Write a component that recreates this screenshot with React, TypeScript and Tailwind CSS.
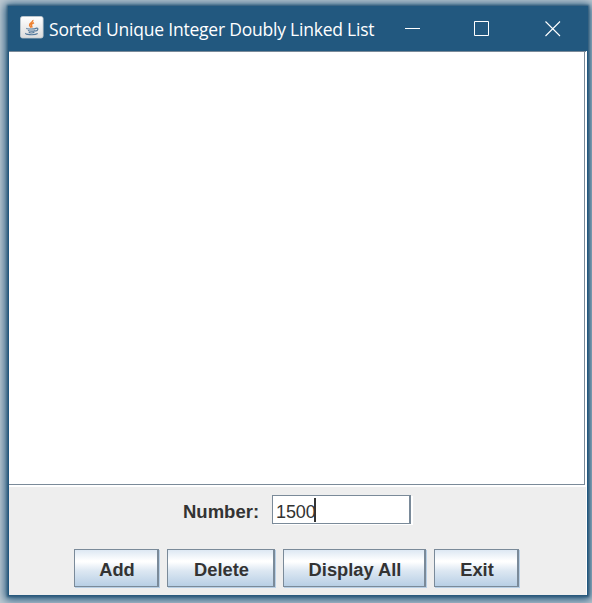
import React from 'react';

function JavaIcon() {
  return (
    <svg className="block h-6 w-6 shrink-0" viewBox="0 0 24 24" fill="none">
      <defs>
        <linearGradient id="tile" x1="0" y1="0" x2="0" y2="1">
          <stop offset="0" stopColor="#ffffff" />
          <stop offset="1" stopColor="#dcdcdc" />
        </linearGradient>
      </defs>
      <rect x="0.5" y="0.5" width="22.6" height="21.5" rx="2" fill="url(#tile)" stroke="#c3cbd1" strokeWidth="0.8" />
      <path d="M12.9 4c.7 2.1-3.9 3.1-3.3 5.4.2.8 1.1 1.5 1.5 2.2M14 6.8c-1.8.8-3.2 1.6-2.5 2.8.4.7.8 1.1.1 2" stroke="#ee8130" strokeWidth="1.5" />
      <path d="M6.9 12.2c-1.5.8 7.5 1.2 9.5 0M8 14.4c1 1 5.8 1 7.4 0M8.8 16.3c1 .9 4 .9 5.6 0M15.6 12.3c3.6-1 2.7 2.5-.3 2.9M5.9 17.2c-2 1.3 8.3 2.4 11.8.4" stroke="#52789b" strokeWidth="1.15" />
    </svg>
  );
}

function TitleBar() {
  return (
    <header className="flex h-[45px] shrink-0 items-start bg-[#22587f] pl-3">
      <div className="pt-[10px]"><JavaIcon /></div>
      <h1 className="ml-[5px] mt-[10px] w-[348px] shrink-0 whitespace-nowrap font-['Open_Sans','Noto_Sans',sans-serif] text-[17.5px] font-normal leading-[26px] tracking-[-0.22px] text-white">
        Sorted Unique Integer Doubly Linked List
      </h1>
      <div className="ml-2 mt-[15px] flex gap-[54px]">
        <svg className="h-4 w-4" viewBox="0 0 16 16"><path d="M0 7.5h15" stroke="white" /></svg>
        <svg className="-ml-px h-4 w-4" viewBox="0 0 16 16" fill="none"><path d="M.5.5h14v14H.5z" stroke="white" /></svg>
        <svg className="ml-px h-4 w-4" viewBox="0 0 16 16"><path d="m.5.5 14.5 14.5M15 .5.5 15" stroke="white" strokeWidth="1.1" /></svg>
      </div>
    </header>
  );
}

function SwingButton({ label, width }: { label: string; width: string }) {
  return (
    <button className={`${width} h-[38px] shrink-0 border border-r-2 border-[#7a8a99] bg-[linear-gradient(to_bottom,#dde8f3_0%,#ffffff_30%,#ffffff_33%,#dce7f2_58%,#b8cfe5_100%)] pl-[2px] pt-[3px] text-center text-[18.3px] font-bold leading-[18px] text-[#333333] shadow-[1px_1px_0_#b8cfe5]`}>
      {label}
    </button>
  );
}

export default function App() {
  return (
    <div className="h-[603px] w-[592px] overflow-hidden bg-[#c0cbd3] px-2 pb-[7px] pt-[6px] font-['Liberation_Sans',Arial,sans-serif]">
      <main className="flex h-[590px] w-[580px] flex-col bg-[#22587f] shadow-[0_0_2px_1px_#315a79,0_1px_9px_3px_#22587f]">
        <TitleBar />
        <div className="ml-px flex w-[578px] grow flex-col bg-white pr-px">
          <div className="w-[577px] border-t border-[#7a8a99] pr-px">
            <textarea aria-label="Integer list" readOnly className="block h-[433px] w-full resize-none border-b border-r border-[#7a8a99] bg-white outline-none" />
          </div>
          <section className="mt-0.5 grow bg-[#eeeeee] pt-2">
            <div className="flex items-start pl-[174px]">
              <label htmlFor="number" className="w-[89px] pt-[5px] text-[18.5px] font-bold leading-6 text-[#333333]">Number:</label>
              <div id="number" className="flex h-[29px] w-[139px] items-start border border-r-2 border-[#7a8a99] bg-white pl-[3px] pt-[2px] shadow-[2px_1px_0_white]">
                <span className="mt-[2px] w-[38px] text-[18px] leading-6 tracking-[-0.1px] text-[#333333]">1500</span>
                <span className="h-6 w-0.5 bg-[#333333]" />
              </div>
            </div>
            <div className="mt-[25px] flex gap-2 pl-[65px]">
              <SwingButton label="Add" width="w-[85px]" />
              <SwingButton label="Delete" width="w-[108px]" />
              <SwingButton label="Display All" width="w-[143px]" />
              <SwingButton label="Exit" width="w-[85px]" />
            </div>
          </section>
        </div>
        <div className="h-px shrink-0 bg-[#285a7e]" />
      </main>
    </div>
  );
}
